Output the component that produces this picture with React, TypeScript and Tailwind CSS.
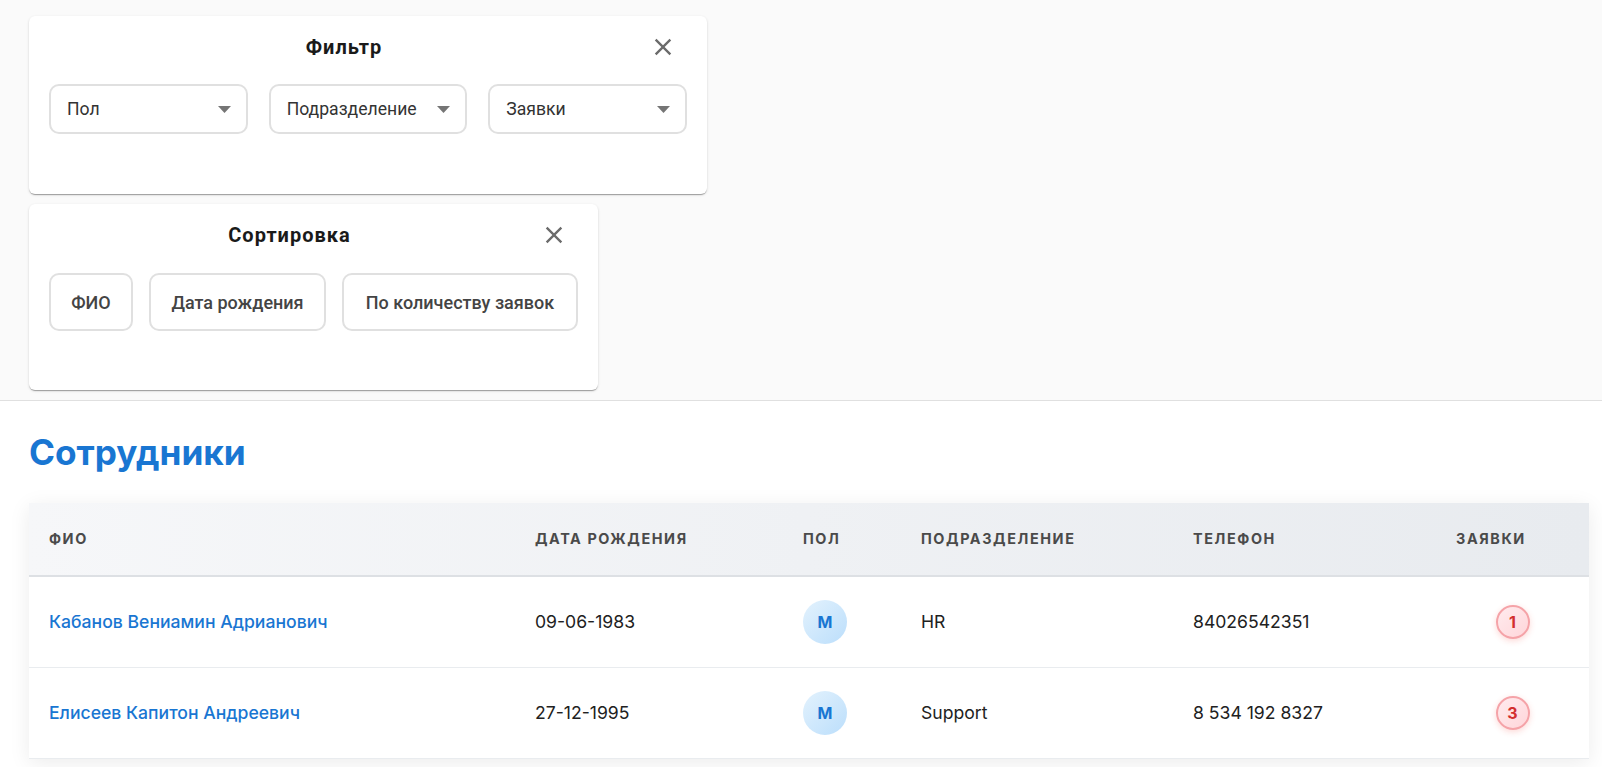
import { useState } from "react"

type Employee = {
  id: number
  name: string
  birth: string
  gender: string
  dept: string
  phone: string
  requests: number
}

const employees: Employee[] = [
  { id: 1, name: "Кабанов Вениамин Адрианович", birth: "09-06-1983", gender: "М", dept: "HR", phone: "84026542351", requests: 1 },
  { id: 2, name: "Елисеев Капитон Андреевич", birth: "27-12-1995", gender: "М", dept: "Support", phone: "8 534 192 8327", requests: 3 },
]

const cols = "grid grid-cols-[486px_268px_118px_272px_263px_153px]"

function CloseIcon() {
  return (
    <svg width="28" height="28" viewBox="0 0 24 24" fill="#6b6b6b">
      <path d="M19 6.41 17.59 5 12 10.59 6.41 5 5 6.41 10.59 12 5 17.59 6.41 19 12 13.41 17.59 19 19 17.59 13.41 12z" />
    </svg>
  )
}

function PanelHeader({ title }: { title: string }) {
  return (
    <div className="flex items-center h-[22px]">
      <h2 className="flex-1 text-center text-[20px] font-bold tracking-[1px] text-[#1a1a1a]">{title}</h2>
      <button className="w-[48px] h-[48px] flex items-center justify-center shrink-0 -my-[13px]">
        <CloseIcon />
      </button>
    </div>
  )
}

function SelectBox({ label }: { label: string }) {
  return (
    <div className="h-[50px] border-2 border-[#e0e0e0] rounded-[10px] flex items-center justify-between pl-[16px] pr-[15px] bg-white">
      <span className="text-[17.6px] text-[#333]">{label}</span>
      <svg width="13" height="7" viewBox="0 0 13 7">
        <path d="M0 0h13L6.5 7z" fill="#757575" />
      </svg>
    </div>
  )
}

export default function App() {
  const [sort, setSort] = useState<string | null>(null)

  return (
    <div className="min-h-screen bg-white">
      <div className="bg-[#fafafa] border-b border-[#e0e0e0] pl-[29px] pt-[16px] pb-[10px] flex flex-col gap-[10px] font-['Roboto',sans-serif]">
        <div className="w-[678px] bg-white rounded-[6px] shadow-[0_2px_1px_-1px_rgba(0,0,0,0.2),0_1px_1px_0_rgba(0,0,0,0.14),0_1px_3px_0_rgba(0,0,0,0.12)] px-[20px] pt-[20px] pb-[60px]">
          <PanelHeader title="Фильтр" />
          <div className="grid grid-cols-3 gap-[21px] mt-[26px]">
            <SelectBox label="Пол" />
            <SelectBox label="Подразделение" />
            <SelectBox label="Заявки" />
          </div>
        </div>

        <div className="w-[569px] bg-white rounded-[6px] shadow-[0_2px_1px_-1px_rgba(0,0,0,0.2),0_1px_1px_0_rgba(0,0,0,0.14),0_1px_3px_0_rgba(0,0,0,0.12)] px-[20px] pt-[20px] pb-[59px]">
          <PanelHeader title="Сортировка" />
          <div className="flex gap-[16px] mt-[27px]">
            {[
              { label: "ФИО", w: "w-[84px]" },
              { label: "Дата рождения", w: "w-[177px]" },
              { label: "По количеству заявок", w: "w-[236px]" },
            ].map((b) => (
              <button
                key={b.label}
                onClick={() => setSort(b.label)}
                className={`${b.w} h-[58px] border-2 rounded-[10px] bg-white text-[18px] font-medium text-[#444] ${
                  sort === b.label ? "border-[#1976d2]" : "border-[#e0e0e0]"
                }`}
              >
                {b.label}
              </button>
            ))}
          </div>
        </div>
      </div>

      <div className="pl-[29px] pt-[29px] font-['Inter',sans-serif]">
        <h1 className="text-[35.2px] leading-[44px] font-bold text-[#1976d2]">Сотрудники</h1>

        <div className="w-[1560px] mt-[29px] bg-white shadow-[0_4px_20px_rgba(0,0,0,0.08)]">
          <div className={`${cols} h-[74px] bg-gradient-to-r from-[#f6f7f9] to-[#e8ebef] border-b-2 border-[#dde0e4] text-[14.4px] font-bold tracking-[1.6px] text-[#4a4a4a] uppercase`}>
            <div className="flex items-center px-[20px]">ФИО</div>
            <div className="flex items-center px-[20px]">Дата рождения</div>
            <div className="flex items-center px-[20px]">Пол</div>
            <div className="flex items-center px-[20px]">Подразделение</div>
            <div className="flex items-center px-[20px]">Телефон</div>
            <div className="flex items-center px-[20px]">Заявки</div>
          </div>

          {employees.map((e) => (
            <div key={e.id} className={`${cols} h-[91px] border-b border-[#e9ecef] text-[17.6px] text-[#212121]`}>
              <div className="flex items-center px-[20px]">
                <a href="#" className="font-medium text-[#1976d2]">{e.name}</a>
              </div>
              <div className="flex items-center px-[20px]">{e.birth}</div>
              <div className="flex items-center px-[20px]">
                <span className="w-[44px] h-[44px] rounded-full bg-gradient-to-br from-[#e3f2fd] to-[#bbdefb] flex items-center justify-center text-[16px] font-bold text-[#1976d2]">
                  {e.gender}
                </span>
              </div>
              <div className="flex items-center px-[20px]">{e.dept}</div>
              <div className="flex items-center px-[20px]">{e.phone}</div>
              <div className="flex items-center justify-center">
                <span className="w-[34px] h-[34px] rounded-full border-2 border-[#f5a3a8] bg-gradient-to-br from-[#ffebee] to-[#ffd6da] shadow-[0_2px_6px_rgba(244,67,54,0.2)] flex items-center justify-center text-[16px] font-bold text-[#d32f2f]">
                  {e.requests}
                </span>
              </div>
            </div>
          ))}
        </div>
      </div>
    </div>
  )
}
